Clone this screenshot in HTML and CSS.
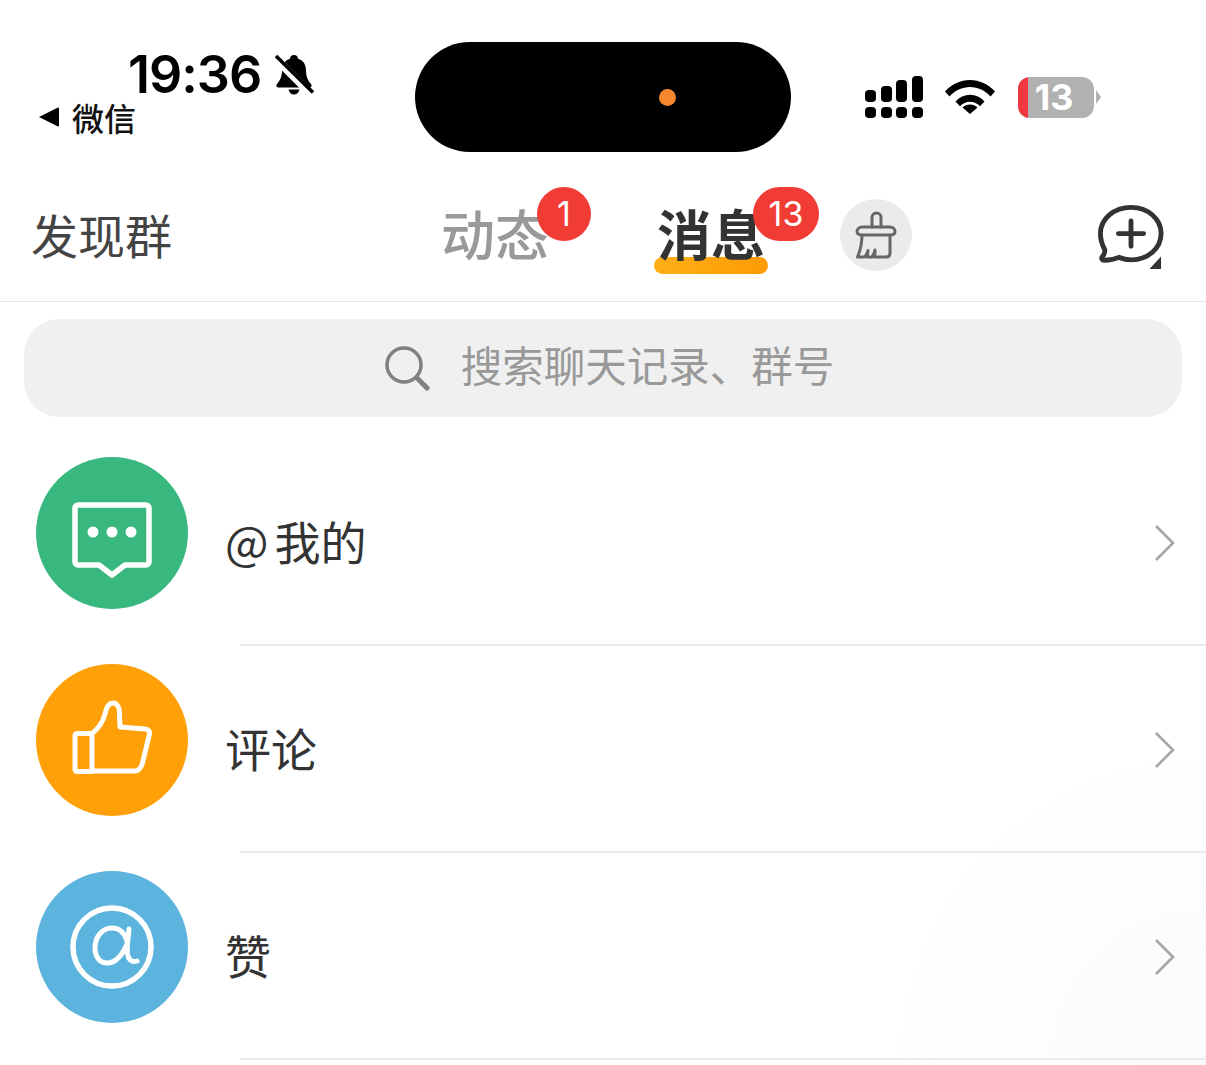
FILE: index.html
```html
<!DOCTYPE html>
<html lang="zh-CN">
<head>
  <meta charset="UTF-8" />
  <meta name="viewport" content="width=device-width, initial-scale=1.0" />
  <title>消息</title>
  <link rel="stylesheet" href="styles.css">
</head>
<body>
  <div class="status-bar">
    <div class="status-left">
      <div class="time-line">
        <span class="time">19:36</span>
        <svg class="bell" width="44" height="44" viewBox="0 0 44 44">
          <path d="M22 2c2.400 0 4 1.700 4 3.700 5.500 1.700 8 6.200 8 11.300 0 6 1.500 10 5 14 1.300 1.600.6 3.500-1.500 3.500H6.500C4.400 34.500 3.700 32.600 5 31c3.500-4 5-8 5-14 0-5.100 2.500-9.600 8-11.300C18 3.700 19.600 2 22 2z" fill="#000"/>
          <path d="M16.500 36.500h11c-.6 3-2.900 5-5.500 5s-4.900-2-5.500-5z" fill="#000"/>
          <path d="M3 5l36 36" stroke="#fff" stroke-width="8"/>
          <path d="M4 3l37 36.500" stroke="#000" stroke-width="3.600"/>
        </svg>
      </div>
      <div class="back-line">
        <svg width="22" height="22" viewBox="0 0 22 22"><path d="M1 11L20 1.500c.5-.2 1 .1 1 .7v17.600c0 .6-.5.900-1 .7z" fill="#000"/></svg>
        <span>微信</span>
      </div>
    </div>
    <div class="island"><span class="island-dot"></span></div>
    <div class="status-right">
      <div class="signal">
        <span class="bar b1"></span><span class="bar b2"></span><span class="bar b3"></span><span class="bar b4"></span>
        <span class="dot"></span><span class="dot"></span><span class="dot"></span><span class="dot"></span>
      </div>
      <svg class="wifi" width="52" height="40" viewBox="0 0 52 40">
        <path d="M1 16.500C8 9 16.500 5 26 5s18 4 25 11.500l-4.500 5C41 15.500 34 12 26 12S11 15.500 5.500 21.500z" fill="#000"/>
        <path d="M11.500 26.500C15.500 22 20.500 19.800 26 19.800s10.500 2.200 14.500 6.700L36 31.300c-2.800-3-6-4.500-10-4.500s-7.200 1.500-10 4.500z" fill="#000"/>
        <path d="M18.500 33.500c2-2 4.500-3 7.500-3s5.500 1 7.500 3L26 40z" fill="#000" transform="translate(0 -1)"/>
      </svg>
      <div class="battery">
        <div class="battery-body"><span class="battery-low"></span><span class="battery-num">13</span></div>
        <span class="battery-cap"></span>
      </div>
    </div>
  </div>

  <div class="top-bar">
    <div class="discover">发现群</div>
    <div class="tab tab-dynamic">动态<span class="badge badge-one">1</span></div>
    <div class="tab tab-message">消息<span class="tab-line"></span><span class="badge badge-two">13</span></div>
    <div class="clean-btn">
      <svg width="44" height="50" viewBox="0 0 44 50" fill="none" stroke="#666" stroke-width="3" stroke-linejoin="round" stroke-linecap="round">
        <path d="M18 17V7.500a4.500 4.500 0 0 1 9 0V17"/>
        <path d="M8 17h28c3 0 5 2 5 4.500S39 25 36 25H8c-3 0-5-1.500-5-3.500S5 17 8 17z"/>
        <path d="M8 25c0 8-1.500 15-4.500 22h7c1.500-1.500 3-4 3.500-6.500 0 2.500-.5 4.500-1 6.500h5c1.500-2 2.500-4.500 3-7 0 2.500 0 5-.5 7H32c2.500 0 4-1.500 4-4V25"/>
      </svg>
    </div>
    <svg class="add-chat" width="68" height="66" viewBox="0 0 70 68">
      <path d="M35 3.500c17.500 0 31 11.800 31 27s-13.500 27-31 27c-5 0-8.500-1-12.500-2.500-4 1.800-9.500 3-15 3-2.500 0-3.400-2-2-3.800 2-2.200 2.800-4.500 2.500-7C4.800 41.500 3.500 36.500 3.500 30.500c0-15.200 14-27 31.500-27z" fill="none" stroke="#333" stroke-width="5"/>
      <path d="M35 17.500v26M22 30.500h26" stroke="#333" stroke-width="5" stroke-linecap="round"/>
      <path d="M66 54v13H54z" fill="#333"/>
    </svg>
  </div>

  <div class="search-wrap">
    <div class="search-box">
      <svg width="46" height="46" viewBox="0 0 46 46" fill="none" stroke="#808080">
        <circle cx="20" cy="20" r="17" stroke-width="3.500"/>
        <path d="M33 33l10 10" stroke-width="5" stroke-linecap="round"/>
      </svg>
      <span class="search-text">搜索聊天记录、群号</span>
    </div>
  </div>

  <div class="list">
    <div class="row">
      <div class="avatar green">
        <svg class="icon-msg" width="80" height="76" viewBox="0 0 80 76" fill="none">
          <path d="M6 3h68a3 3 0 0 1 3 3v54a3 3 0 0 1-3 3H53L40 73 27 63H6a3 3 0 0 1-3-3V6a3 3 0 0 1 3-3z" stroke="#fff" stroke-width="5.500" stroke-linejoin="round"/>
          <circle cx="21" cy="30" r="5.500" fill="#fff"/><circle cx="40" cy="30" r="5.500" fill="#fff"/><circle cx="59" cy="30" r="5.500" fill="#fff"/>
        </svg>
      </div>
      <div class="row-title"><span class="at">@</span>我的</div>
      <svg class="arrow" width="22" height="38" viewBox="0 0 22 38"><path d="M2 2l17 17L2 36" fill="none" stroke="#a6a6a6" stroke-width="2.600"/></svg>
    </div>
    <div class="row">
      <div class="avatar orange">
        <svg class="icon-like" width="80" height="74" viewBox="0 0 80 74" fill="none" stroke="#fff" stroke-width="5" stroke-linejoin="round">
          <path d="M5 33.500h15v38H5a2 2 0 0 1-2-2V35.500a2 2 0 0 1 2-2z"/>
          <path d="M20 33.500C27 28 31 22 33 14c1-5 3-11 8-11 4 0 6.500 4 6.500 10 0 5 .5 11 .5 14l25 2c3 .3 5 2 4.500 5l-7 29c-1 4-4 8-8 8H20"/>
        </svg>
      </div>
      <div class="row-title">评论</div>
      <svg class="arrow" width="22" height="38" viewBox="0 0 22 38"><path d="M2 2l17 17L2 36" fill="none" stroke="#a6a6a6" stroke-width="2.600"/></svg>
    </div>
    <div class="row">
      <div class="avatar blue">
        <svg width="84" height="84" viewBox="0 0 84 84" fill="none" stroke="#fff">
          <circle cx="42" cy="42" r="39" stroke-width="5.500"/>
          <path d="M59 24c-1 12-2.500 18-1.500 25 .6 5 4 9 9.500 7M57.500 38C55 28 50 23 42 23c-10 0-17 9-17 20 0 9 5 15 12 15 9 0 16-9 20.500-20" stroke-width="5" stroke-linecap="round"/>
        </svg>
      </div>
      <div class="row-title">赞</div>
      <svg class="arrow" width="22" height="38" viewBox="0 0 22 38"><path d="M2 2l17 17L2 36" fill="none" stroke="#a6a6a6" stroke-width="2.600"/></svg>
    </div>
  </div>
</body>
</html>
```

FILE: styles.css
```css
html, body {
  height: 100%;
}

body {
  margin: 0;
  width: 1206px;
  height: 1065px;
  overflow: hidden;
  background: radial-gradient(circle at 100% 100%, #fafafa 0, #fff 320px);
  color: #333;
  font-family: "Noto Sans CJK SC", "Liberation Sans", sans-serif;
}

/* status bar */
.status-bar {
  height: 175px;
  display: flex;
  box-sizing: border-box;
  padding-top: 42px;
}

.status-left {
  width: 415px;
  box-sizing: border-box;
  padding: 8px 0 0 38px;
}

.time-line {
  display: flex;
  align-items: center;
  height: 50px;
  padding-left: 90px;
}

.time {
  font-family: Inter, "Liberation Sans", sans-serif;
  font-size: 52px;
  font-weight: 600;
  letter-spacing: -1px;
  line-height: 50px;
  color: #000;
}

.bell {
  margin-left: 11px;
}

.back-line {
  display: flex;
  align-items: center;
  gap: 12px;
  height: 40px;
  margin-top: -3px;
  font-size: 32px;
  font-weight: 500;
  line-height: 40px;
  color: #111;
}

.island {
  width: 376px;
  height: 110px;
  border-radius: 55px;
  background: #000;
  position: relative;
}

.island-dot {
  position: absolute;
  left: 244px;
  top: 47px;
  width: 17px;
  height: 17px;
  border-radius: 50%;
  background: #f5872f;
}

.status-right {
  display: flex;
  align-items: center;
  height: 110px;
  padding-left: 74px;
}

.signal {
  display: grid;
  grid-template-columns: repeat(4, 11px);
  column-gap: 4.700px;
  row-gap: 5px;
  align-items: end;
}

.bar, .dot {
  background: #000;
  border-radius: 4px;
}

.dot {
  height: 11px;
}

.b1 { height: 12px; }
.b2 { height: 16px; }
.b3 { height: 22px; }
.b4 { height: 26px; }

.wifi {
  margin-left: 21px;
  margin-top: -4px;
}

.battery {
  display: flex;
  align-items: center;
  margin-left: 22px;
}

.battery-body {
  width: 76px;
  height: 41px;
  border-radius: 12px;
  background: #b1b1b1;
  overflow: hidden;
  position: relative;
  display: flex;
  align-items: center;
  justify-content: center;
}

.battery-low {
  position: absolute;
  left: 0;
  top: 0;
  bottom: 0;
  width: 10px;
  background: #f0363f;
}

.battery-num {
  font-family: Inter, "Liberation Sans", sans-serif;
  font-size: 36px;
  font-weight: 700;
  color: #fff;
  padding-right: 4px;
}

.battery-cap {
  width: 5px;
  height: 14px;
  margin-left: 2px;
  background: #b1b1b1;
  clip-path: polygon(0 0, 100% 50%, 0 100%);
}

/* top tabs */
.top-bar {
  height: 127px;
  box-sizing: border-box;
  border-bottom: 1px solid #e6e6e6;
  position: relative;
}

.discover {
  position: absolute;
  left: 31px;
  top: 26px;
  font-size: 47px;
  line-height: 66px;
  color: #444;
}

.tab {
  position: absolute;
  top: 22px;
  font-size: 54px;
  line-height: 72px;
}

.tab-dynamic {
  left: 441px;
  color: #999;
  font-weight: 500;
}

.tab-message {
  left: 657px;
  color: #333;
  font-weight: 700;
}

.tab-line {
  position: absolute;
  left: -3px;
  top: 60px;
  width: 114px;
  height: 17px;
  border-radius: 9px;
  background: linear-gradient(90deg, #fdb016, #ff9a05);
  z-index: -1;
}

.badge {
  position: absolute;
  height: 54px;
  border-radius: 27px;
  background: #f13b35;
  color: #fff;
  font-family: Inter, "Liberation Sans", sans-serif;
  font-size: 34px;
  font-weight: 400;
  line-height: 54px;
  text-align: center;
}

.badge-one {
  left: 96px;
  top: -10px;
  width: 54px;
}

.badge-two {
  left: 96px;
  top: -10px;
  width: 66px;
}

.clean-btn {
  position: absolute;
  left: 840px;
  top: 24px;
  width: 72px;
  height: 72px;
  border-radius: 50%;
  background: #ebebeb;
  display: flex;
  align-items: center;
  justify-content: center;
}

.add-chat {
  position: absolute;
  left: 1097px;
  top: 29px;
}

/* search */
.search-wrap {
  padding: 17px 24px 0;
}

.search-box {
  height: 98px;
  border-radius: 36px;
  background: #f0f0f0;
  display: flex;
  align-items: center;
  justify-content: center;
  gap: 31px;
  padding-left: 12px;
}

.search-text {
  font-size: 41.500px;
  color: #999;
  padding-bottom: 8px;
}

/* rows */
.list {
  padding-top: 22px;
}

.row {
  height: 207px;
  box-sizing: border-box;
  display: flex;
  align-items: center;
  padding: 0 30px 19px 36px;
  position: relative;
}

.row::after {
  content: "";
  position: absolute;
  left: 240px;
  right: 0;
  bottom: 0;
  height: 2px;
  background: #ebebeb;
}

.avatar {
  width: 152px;
  height: 152px;
  border-radius: 50%;
  display: flex;
  align-items: center;
  justify-content: center;
  flex-shrink: 0;
}

.green { background: #38b87f; }
.orange { background: #ffa008; }
.blue { background: #5cb3dd; }

.icon-msg {
  margin-top: 14px;
}

.icon-like {
  margin-bottom: 6px;
}

.row-title {
  flex: 1;
  margin-left: 37px;
  padding-top: 14px;
  font-size: 46px;
  line-height: 66px;
  color: #333;
}

.at {
  margin-right: 6px;
}

.arrow {
  margin-top: 20px;
}
```
